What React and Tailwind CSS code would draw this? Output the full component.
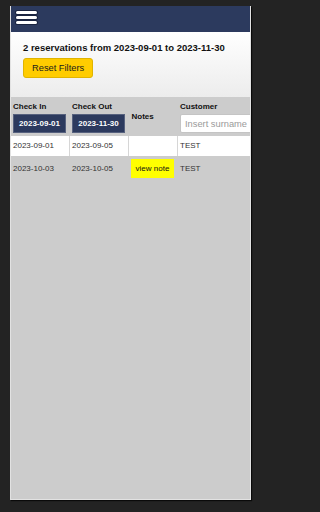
import React from 'react';

const font = { fontFamily: '"Liberation Sans", Arial, sans-serif' };

const reservations = [
  { checkIn: '2023-09-01', checkOut: '2023-09-05', note: null, customer: 'TEST' },
  { checkIn: '2023-10-03', checkOut: '2023-10-05', note: 'x', customer: 'TEST' },
];

function Hamburger() {
  return (
    <div className="flex flex-col gap-[2px]">
      <span className="block w-[21px] h-[3px] rounded-full bg-white ring-1 ring-[#1a2440]" />
      <span className="block w-[21px] h-[3px] rounded-full bg-white ring-1 ring-[#1a2440]" />
      <span className="block w-[21px] h-[3px] rounded-full bg-white ring-1 ring-[#1a2440]" />
    </div>
  );
}

export default function App() {
  return (
    <div className="w-full h-[512px] bg-[#232323] pt-[6px] pl-[10px]" style={font}>
      <div className="w-[241px] h-[494px] flex flex-col overflow-hidden border-x border-b border-[#e2e2e2] shadow-[1px_1px_1px_#0a0a0a]">
        {/* Nav */}
        <div className="h-[26px] shrink-0 bg-[#2c3a5e] pl-[5px] pt-[5px]">
          <Hamburger />
        </div>

        {/* Summary */}
        <div className="h-[65px] shrink-0 bg-gradient-to-b from-white to-[#ececec] pl-[12px] pt-[9.5px]">
          <p className="text-[9.5px] leading-[12px] font-bold text-[#111] whitespace-nowrap">
            2 reservations from 2023-09-01 to 2023-11-30
          </p>
          <button className="mt-[4px] h-[19.5px] px-[8px] rounded-[3px] bg-[#ffcc00] border border-[#e0b400] text-[9.3px] leading-none text-[#1a1a1a]">
            Reset Filters
          </button>
        </div>

        {/* Table */}
        <div className="flex-1 bg-[#cccccc] overflow-hidden">
          <table className="table-fixed border-separate border-spacing-0 w-[290px] text-[8px] text-[#333]">
            <colgroup>
              <col className="w-[58px]" />
              <col className="w-[59px]" />
              <col className="w-[49px]" />
              <col className="w-[124px]" />
            </colgroup>
            <thead>
              <tr className="h-[39px]">
                <th className="align-top text-left font-bold text-[#111] pl-[2px] pt-[5px] pb-[3px]">
                  <div className="leading-[10px]">Check In</div>
                  <input
                    readOnly
                    value="2023-09-01"
                    className="mt-[2px] block w-[53px] h-[19px] bg-[#2c3a5e] border border-[#56617e] text-white font-bold text-[8px] text-center outline-none"
                  />
                </th>
                <th className="align-top text-left font-bold text-[#111] pl-[3px] pt-[5px] pb-[3px]">
                  <div className="leading-[10px]">Check Out</div>
                  <input
                    readOnly
                    value="2023-11-30"
                    className="mt-[2px] block w-[53px] h-[19px] bg-[#2c3a5e] border border-[#56617e] text-white font-bold text-[8px] text-center outline-none"
                  />
                </th>
                <th className="align-middle text-left font-bold text-[#111] pl-[3.5px] leading-[10px]">Notes</th>
                <th className="align-top text-left font-bold text-[#111] pl-[3px] pt-[5px] pb-[3px]">
                  <div className="leading-[10px]">Customer</div>
                  <input
                    placeholder="Insert surname"
                    className="mt-[2px] block w-[110px] h-[19px] bg-white border border-[#c4c4c4] rounded-[2px] px-[4px] text-[9.3px] font-normal text-[#333] placeholder:text-[#9a9a9a] outline-none"
                  />
                </th>
              </tr>
            </thead>
            <tbody>
              {reservations.map((r, i) => {
                const first = i % 2 === 0;
                const sep = first ? 'border-l border-[#d6d6d6]' : 'border-l border-transparent';
                return (
                  <tr key={i} className={first ? 'h-[20px] bg-white' : 'h-[25px] bg-[#cccccc]'}>
                    <td className="pl-[2px]">{r.checkIn}</td>
                    <td className={`pl-[2px] ${sep}`}>{r.checkOut}</td>
                    <td className={`pl-[2px] ${sep}`}>
                      {r.note && (
                        <button className="h-[19px] w-[43px] bg-[#ffff00] text-[8px] leading-none text-[#111]">
                          view note
                        </button>
                      )}
                    </td>
                    <td className={`pl-[2px] ${sep}`}>{r.customer}</td>
                  </tr>
                );
              })}
            </tbody>
          </table>
        </div>
      </div>
    </div>
  );
}
